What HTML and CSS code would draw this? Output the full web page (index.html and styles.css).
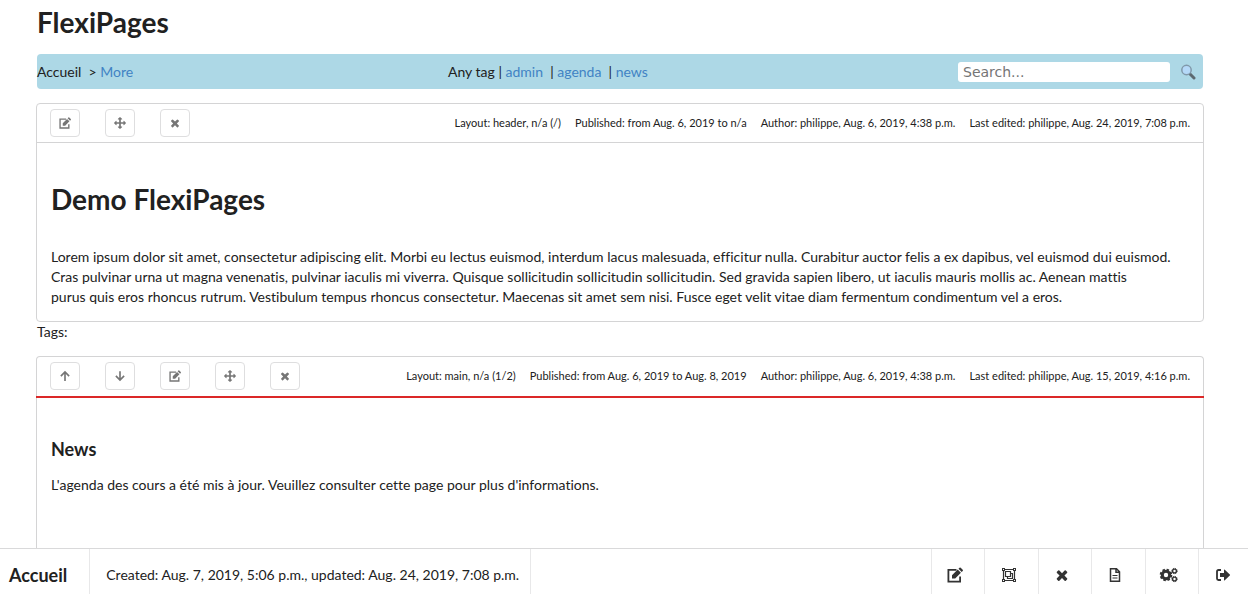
FILE: index.html
```html
<!DOCTYPE html>
<html lang="en">
<head>
<meta charset="utf-8">
<title>FlexiPages</title>
<link rel="stylesheet" href="styles.css">
</head>
<body>
<svg class="sprite" aria-hidden="true">
  <symbol id="edit" viewBox="0 0 16 16"><path d="M9.500 2.900H1.400v11.700h11.700V9.500" fill="none" stroke="currentColor" stroke-width="1.800"/><path d="M5 11.500V8.200L10.700 2.500l3.200 3.200L8.200 11.500zM11.500 1.700l1-1q.6-.6 1.200 0l2 2q.6.600 0 1.200l-1 1z" fill="currentColor"/></symbol>
  <symbol id="move" viewBox="0 0 1792 1792"><path fill="currentColor" d="M1792 896q0 26-19 45l-256 256q-19 19-45 19t-45-19-19-45v-128h-384v384h128q26 0 45 19t19 45-19 45l-256 256q-19 19-45 19t-45-19l-256-256q-19-19-19-45t19-45 45-19h128v-384h-384v128q0 26-19 45t-45 19-45-19l-256-256q-19-19-19-45t19-45l256-256q19-19 45-19t45 19 19 45v128h384v-384h-128q-26 0-45-19t-19-45 19-45l256-256q19-19 45-19t45 19l256 256q19 19 19 45t-19 45-45 19h-128v384h384v-128q0-26 19-45t45-19 45 19l256 256q19 19 19 45z"/></symbol>
  <symbol id="close" viewBox="0 0 1792 1792"><path fill="currentColor" d="M1490 1322q0 40-28 68l-136 136q-28 28-68 28t-68-28l-294-294-294 294q-28 28-68 28t-68-28l-136-136q-28-28-28-68t28-68l294-294-294-294q-28-28-28-68t28-68l136-136q28-28 68-28t68 28l294 294 294-294q28-28 68-28t68 28l136 136q28 28 28 68t-28 68l-294 294 294 294q28 28 28 68z"/></symbol>
  <symbol id="up" viewBox="0 0 16 16"><path d="M8 14.500V3M2.500 8.200L8 2.700l5.500 5.500" fill="none" stroke="currentColor" stroke-width="2.200"/></symbol>
  <symbol id="down" viewBox="0 0 16 16"><path d="M8 1.500V13M2.500 7.800L8 13.300l5.500-5.500" fill="none" stroke="currentColor" stroke-width="2.200"/></symbol>
  <symbol id="group" viewBox="0 0 16 16"><g fill="none" stroke="currentColor" stroke-width="1.200"><path d="M2.500 2.500h11v11h-11z"/><path d="M4.500 4.500h5v5h-5zM9.500 6.500h2v5h-5v-2"/></g><path d="M1 1h3v3H1zM12 1h3v3h-3zM1 12h3v3H1zM12 12h3v3h-3z" fill="currentColor"/><path d="M2 2h1v1H2zM13 2h1v1h-1zM2 13h1v1H2zM13 13h1v1h-1z" fill="#fff"/></symbol>
  <symbol id="file" viewBox="0 0 16 16"><path d="M3.500 1.700h6l3 3v9.600h-9zM9 1.700v3.500h3.500" fill="none" stroke="currentColor" stroke-width="1.500"/><path d="M5.500 8.500h5M5.500 11h5" stroke="currentColor" stroke-width="1.200"/></symbol>
  <symbol id="cogs" viewBox="0 0 20 16"><circle cx="7" cy="8" r="3.700" fill="none" stroke="currentColor" stroke-width="3"/><circle cx="7" cy="8" r="5.300" fill="none" stroke="currentColor" stroke-width="2" stroke-dasharray="2.400 1.762"/><circle cx="15.500" cy="4" r="1.900" fill="none" stroke="currentColor" stroke-width="1.400"/><circle cx="15.500" cy="4" r="2.700" fill="none" stroke="currentColor" stroke-width="1" stroke-dasharray="1.200 .920"/><circle cx="15.500" cy="12" r="1.900" fill="none" stroke="currentColor" stroke-width="1.400"/><circle cx="15.500" cy="12" r="2.700" fill="none" stroke="currentColor" stroke-width="1" stroke-dasharray="1.200 .920"/></symbol>
  <symbol id="exit" viewBox="0 0 16 16"><path d="M6 3H3.500Q2 3 2 4.500v7Q2 13 3.500 13H6" fill="none" stroke="currentColor" stroke-width="1.800"/><path d="M5 6h4V3q0-1 .8-.3l5 4.700q.6.600 0 1.200l-5 4.700q-.8.700-.8-.3v-3H5z" fill="currentColor"/></symbol>
</svg>

<main class="page">
  <h1 class="site-title">FlexiPages</h1>

  <nav class="topbar" aria-label="Navigation">
    <div class="crumbs">Accueil &nbsp;&gt; <a href="#">More</a></div>
    <div class="tags">Any tag | <a href="#">admin</a> &nbsp;| <a href="#">agenda</a> &nbsp;| <a href="#">news</a></div>
    <form class="search">
      <input class="search-input" type="text" placeholder="Search..." aria-label="Search">
      <button class="search-button" type="button" aria-label="Search">
        <svg class="lens" viewBox="0 0 16 16"><path d="M10 10l4 4" stroke="#5d6970" stroke-width="3" stroke-linecap="round"/><circle cx="6.500" cy="6" r="4.700" fill="#b5d9f8" stroke="#8199aa" stroke-width="1.500"/></svg>
      </button>
    </form>
  </nav>

  <article class="item">
    <header class="item-bar">
      <div class="actions">
        <button class="action" type="button" aria-label="Edit"><svg class="icon"><use href="#edit"/></svg></button>
        <button class="action" type="button" aria-label="Move"><svg class="icon"><use href="#move"/></svg></button>
        <button class="action" type="button" aria-label="Remove"><svg class="icon"><use href="#close"/></svg></button>
      </div>
      <div class="meta">
        <span>Layout: header, n/a (/)</span>
        <span>Published: from Aug. 6, 2019 to n/a</span>
        <span>Author: philippe, Aug. 6, 2019, 4:38 p.m.</span>
        <span>Last edited: philippe, Aug. 24, 2019, 7:08 p.m.</span>
      </div>
    </header>
    <div class="item-body">
      <h1 class="title">Demo FlexiPages</h1>
      <p class="text">Lorem ipsum dolor sit amet, consectetur adipiscing elit. Morbi eu lectus euismod, interdum lacus malesuada, efficitur nulla. Curabitur auctor felis a ex dapibus, vel euismod dui euismod. Cras pulvinar urna ut magna venenatis, pulvinar iaculis mi viverra. Quisque sollicitudin sollicitudin sollicitudin. Sed gravida sapien libero, ut iaculis mauris mollis ac. Aenean mattis<br>purus quis eros rhoncus rutrum. Vestibulum tempus rhoncus consectetur. Maecenas sit amet sem nisi. Fusce eget velit vitae diam fermentum condimentum vel a eros.</p>
    </div>
  </article>
  <div class="item-tags">Tags:</div>

  <article class="item item-last">
    <header class="item-bar item-bar-alert">
      <div class="actions">
        <button class="action" type="button" aria-label="Move up"><svg class="icon"><use href="#up"/></svg></button>
        <button class="action" type="button" aria-label="Move down"><svg class="icon"><use href="#down"/></svg></button>
        <button class="action" type="button" aria-label="Edit"><svg class="icon"><use href="#edit"/></svg></button>
        <button class="action" type="button" aria-label="Move"><svg class="icon"><use href="#move"/></svg></button>
        <button class="action" type="button" aria-label="Remove"><svg class="icon"><use href="#close"/></svg></button>
      </div>
      <div class="meta">
        <span>Layout: main, n/a (1/2)</span>
        <span>Published: from Aug. 6, 2019 to Aug. 8, 2019</span>
        <span>Author: philippe, Aug. 6, 2019, 4:38 p.m.</span>
        <span>Last edited: philippe, Aug. 15, 2019, 4:16 p.m.</span>
      </div>
    </header>
    <div class="item-body">
      <h3 class="subtitle">News</h3>
      <p class="text">L'agenda des cours a été mis à jour. Veuillez consulter cette page pour plus d'informations.</p>
    </div>
  </article>
</main>

<footer class="dock">
  <strong class="dock-title">Accueil</strong>
  <span class="dock-info">Created: Aug. 7, 2019, 5:06 p.m., updated: Aug. 24, 2019, 7:08 p.m.</span>
  <div class="dock-tools">
    <button class="tool" type="button" aria-label="Edit page"><svg class="tool-icon"><use href="#edit"/></svg></button>
    <button class="tool" type="button" aria-label="Layout"><svg class="tool-icon"><use href="#group"/></svg></button>
    <button class="tool" type="button" aria-label="Delete page"><svg class="tool-icon"><use href="#close"/></svg></button>
    <button class="tool" type="button" aria-label="New page"><svg class="tool-icon"><use href="#file"/></svg></button>
    <button class="tool" type="button" aria-label="Settings"><svg class="tool-icon tool-icon-wide"><use href="#cogs"/></svg></button>
    <button class="tool" type="button" aria-label="Log out"><svg class="tool-icon"><use href="#exit"/></svg></button>
  </div>
</footer>
</body>
</html>
```

FILE: styles.css
```css
* { box-sizing: border-box; }
body {
  margin: 0;
  min-height: 100vh;
  display: flex;
  flex-direction: column;
  font: 14px/20px Lato, "Liberation Sans", sans-serif;
  font-variant-ligatures: none;
  color: #212121;
  background: #fff;
}
a { color: #4183c4; text-decoration: none; }
h1, h3, p { margin: 0; }
button {
  font: inherit;
  color: inherit;
  background: none;
  border: 0;
  padding: 0;
  cursor: pointer;
}
.sprite { display: none; }
.page {
  flex: 1;
  display: flex;
  flex-direction: column;
  padding: 4px 44px 0 36px;
}
.site-title {
  padding-left: 1px;
  font-size: 28px;
  line-height: 36px;
  margin-bottom: 14px;
}
.topbar {
  display: grid;
  grid-template-columns: 411px 1fr auto;
  align-items: center;
  height: 35px;
  margin: 0 1px 14px;
  background: #add8e6;
  border-radius: 4px;
}
.search { display: flex; align-items: center; padding-right: 7px; }
.search-input {
  width: 212px;
  height: 20px;
  padding: 0 5px;
  border: 0;
  border-radius: 3px;
  background: #fff;
  font: 14px/20px "DejaVu Sans", sans-serif;
}
.search-input::placeholder { color: #757575; opacity: 1; }
.search-button { display: flex; margin-left: 10px; }
.lens { width: 16px; height: 16px; }
.item { border: 1px solid #d4d4d5; border-radius: 4px; }
.item-last {
  flex: 1;
  border-bottom: 0;
  border-radius: 4px 4px 0 0;
}
.item-bar {
  display: flex;
  align-items: center;
  justify-content: space-between;
  height: 39px;
  padding: 0 13px;
  border-bottom: 1px solid #d4d4d5;
}
.item-bar-alert {
  height: 41px;
  margin: 0 -1px;
  padding: 0 14px 1px;
  border-bottom: 2px solid #db2828;
}
.actions { display: flex; gap: 25px; }
.action {
  display: flex;
  align-items: center;
  justify-content: center;
  width: 30px;
  height: 28px;
  border: 1px solid #dededf;
  border-radius: 4px;
  color: #767676;
}
.icon { width: 12px; height: 12px; }
.meta { display: flex; gap: 14px; font-size: 11px; line-height: 20px; }
.item-body { padding: 38px 14px 14px; }
.title { font-size: 28px; line-height: 36px; margin-bottom: 30px; }
.subtitle { font-size: 18px; line-height: 26px; margin-bottom: 13px; }
.item-tags { padding: 0 1px; margin-bottom: 14px; }
.dock {
  position: sticky;
  bottom: 0;
  display: flex;
  height: 46px;
  border-top: 1px solid #d9d9da;
  background: #fff;
}
.dock-title, .dock-info {
  display: flex;
  align-items: center;
  padding-top: 6px;
  border-right: 1px solid #e8e8e9;
}
.dock-title { padding-left: 9px; padding-right: 22px; font-size: 18px; }
.dock-info { padding-left: 16px; padding-right: 11px; }
.dock-tools {
  display: grid;
  grid-template-columns: repeat(5, 1fr) 50px;
  width: 317px;
  margin-left: auto;
}
.tool {
  display: flex;
  align-items: center;
  justify-content: center;
  padding-top: 7px;
  padding-right: 6px;
  border-left: 1px solid #e8e8e9;
  color: #333;
}
.tool:last-child { padding-right: 2px; }
.tool-icon { width: 16px; height: 16px; }
.tool-icon-wide { width: 20px; }
```
